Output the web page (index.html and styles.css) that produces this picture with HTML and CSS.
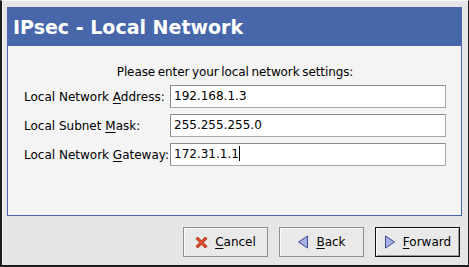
FILE: index.html
```html
<!DOCTYPE html>
<html lang="en">
<head>
  <meta charset="UTF-8" />
  <title>IPsec - Local Network</title>
  <link rel="stylesheet" href="styles.css">
</head>
<body>
  <div class="window">
    <div class="panel">
      <div class="header">IPsec - Local Network</div>
      <div class="content">
        <p class="intro">Please enter your local network settings:</p>
        <div class="form">
          <label>Local Network <u>A</u>ddress:</label>
          <div class="entry">192.168.1.3</div>
          <label>Local Subnet <u>M</u>ask:</label>
          <div class="entry">255.255.255.0</div>
          <label>Local Network <u>G</u>ateway:</label>
          <div class="entry">172.31.1.1<span class="caret"></span></div>
        </div>
      </div>
    </div>
    <div class="actions">
      <button type="button">
        <svg width="13" height="13" viewBox="0 0 12 12">
          <path d="M1 2.5 L2.5 1 L6 4.5 L9.5 1 L11 2.5 L7.5 6 L11 9.5 L9.5 11 L6 7.5 L2.5 11 L1 9.5 L4.5 6 Z" fill="#e8502c" stroke="#a3200c" stroke-width="0.9" stroke-linejoin="round"/>
        </svg>
        <span><u>C</u>ancel</span>
      </button>
      <button type="button">
        <svg width="12" height="14" viewBox="0 0 12 14">
          <path d="M10.5 1 L10.5 13 L1.5 7 Z" fill="#a6b0e6" stroke="#3d4a8e" stroke-width="1" stroke-linejoin="round"/>
        </svg>
        <span><u>B</u>ack</span>
      </button>
      <button type="button" class="default">
        <svg width="12" height="14" viewBox="0 0 12 14">
          <path d="M1.5 1 L1.5 13 L10.5 7 Z" fill="#a6b0e6" stroke="#3d4a8e" stroke-width="1" stroke-linejoin="round"/>
        </svg>
        <span><u>F</u>orward</span>
      </button>
    </div>
  </div>
</body>
</html>
```

FILE: styles.css
```css
body {
  margin: 0;
  font-family: 'DejaVu Sans', sans-serif;
  font-size: 12px;
  color: #000;
  background: #e6e6e6;
}
.window {
  width: 469px;
  height: 267px;
  box-sizing: border-box;
  padding: 6px 6px 0 5px;
  background: #e6e6e6;
  border-top: 1px solid #f8f8f8;
  border-left: 2px solid #1e1e1e;
  border-right: 1px solid #1e1e1e;
  border-bottom: 2px solid #1e1e1e;
  box-shadow: inset 1px 0 0 #f8f8f8;
}
.panel {
  height: 209px;
  box-sizing: border-box;
  border: 1px solid #4767aa;
  background: #f4f4f4;
}
.header {
  height: 38px;
  background: #4767aa;
  color: #fff;
  font-weight: bold;
  font-size: 19px;
  line-height: 38px;
  padding-left: 5px;
}
.content {
  padding: 18px 15px 0 16px;
}
.intro {
  margin: 0 0 5px;
  text-align: center;
  line-height: 16px;
  letter-spacing: -0.1px;
  word-spacing: -1px;
}
.form {
  display: grid;
  grid-template-columns: 146px 1fr;
  row-gap: 6px;
  align-items: center;
}
.form u, .actions u {
  text-decoration-thickness: 1px;
  text-underline-offset: 2px;
}
.entry {
  height: 23px;
  box-sizing: border-box;
  border: 1px solid #a6a6a6;
  border-top-color: #8c8c8c;
  border-left-color: #8c8c8c;
  background: #fff;
  padding-left: 3px;
  line-height: 21px;
}
.caret {
  display: inline-block;
  width: 1px;
  height: 15px;
  background: #000;
  vertical-align: -3px;
}
.actions {
  display: flex;
  justify-content: flex-end;
  gap: 11px;
  padding: 11px 2px 0 0;
}
.actions button {
  width: 85px;
  height: 30px;
  display: flex;
  align-items: center;
  justify-content: center;
  gap: 7px;
  font-family: inherit;
  font-size: 12px;
  color: #000;
  background: #e9e9e9;
  border: 1px solid #8f8f8f;
  box-shadow: inset 1px 1px 0 #fafafa;
  padding: 0;
}
.actions button.default {
  border-color: #111;
  box-shadow: inset 1px 1px 0 #fafafa, inset -1px -1px 0 #9a9a9a;
}
```
